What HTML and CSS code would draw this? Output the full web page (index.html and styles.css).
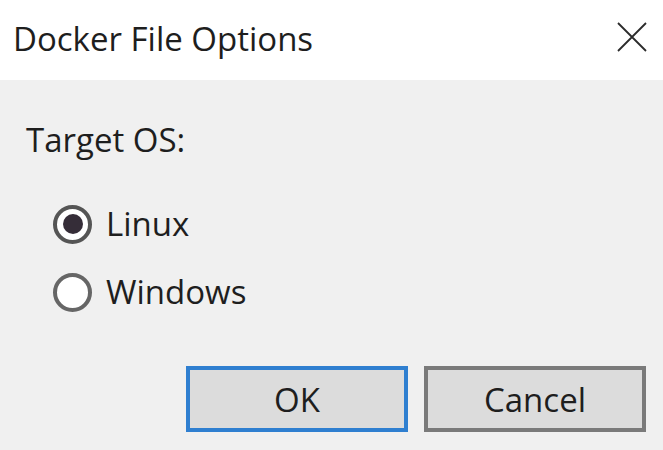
FILE: index.html
```html
<!DOCTYPE html>
<html>
<head>
<meta charset="utf-8">
<link rel="stylesheet" href="styles.css">
</head>
<body>
<div class="dialog">
  <div class="titlebar">
    <span class="title">Docker File Options</span>
    <svg class="close" width="30" height="30" viewBox="0 0 30 30">
      <path d="M1 1 L29 29 M29 1 L1 29" stroke="#2b2b2b" stroke-width="1.8" fill="none"/>
    </svg>
  </div>
  <div class="content">
    <div class="label">Target OS:</div>
    <div class="options">
      <label class="option">
        <span class="radio checked"><span class="dot"></span></span>
        <span class="opt-text">Linux</span>
      </label>
      <label class="option">
        <span class="radio"></span>
        <span class="opt-text">Windows</span>
      </label>
    </div>
    <div class="buttons">
      <div class="btn btn-default">OK</div>
      <div class="btn">Cancel</div>
    </div>
  </div>
</div>
</body>
</html>
```

FILE: styles.css
```css
html, body {
  margin: 0;
  padding: 0;
}
body {
  width: 663px;
  height: 450px;
  overflow: hidden;
  font-family: "Open Sans", "Noto Sans", sans-serif;
  color: #1e1e1e;
}
.dialog {
  width: 663px;
  height: 450px;
  background: #f0f0f0;
  display: flex;
  flex-direction: column;
}
.titlebar {
  height: 80px;
  background: #ffffff;
  display: flex;
  align-items: center;
  justify-content: space-between;
  padding: 0 16px 0 13px;
  box-sizing: border-box;
}
.title {
  font-size: 33px;
  line-height: 40px;
  margin-top: -2px;
}
.close {
  display: block;
  margin-top: -6px;
}
.content {
  flex: 1;
  display: flex;
  flex-direction: column;
  padding: 0 17px 0 26px;
}
.label {
  font-size: 33px;
  line-height: 40px;
  margin-top: 40px;
}
.options {
  display: flex;
  flex-direction: column;
  gap: 28px;
  margin-top: 44px;
  padding-left: 27px;
}
.option {
  display: flex;
  align-items: center;
  gap: 14px;
  height: 40px;
}
.radio {
  width: 39px;
  height: 39px;
  box-sizing: border-box;
  border: 4px solid #666666;
  border-radius: 50%;
  background: #ffffff;
  display: flex;
  align-items: center;
  justify-content: center;
}
.radio.checked {
  border-color: #555555;
}
.dot {
  width: 20px;
  height: 20px;
  border-radius: 50%;
  background: #352d38;
}
.opt-text {
  font-size: 33px;
  line-height: 40px;
}
.buttons {
  margin-top: auto;
  margin-bottom: 18px;
  display: flex;
  justify-content: flex-end;
  gap: 16px;
}
.btn {
  width: 222px;
  height: 66px;
  box-sizing: border-box;
  border: 4px solid #7a7a7a;
  background: #dcdcdc;
  display: flex;
  align-items: center;
  justify-content: center;
  font-size: 33px;
}
.btn-default {
  border-color: #2f7fd0;
}
```
